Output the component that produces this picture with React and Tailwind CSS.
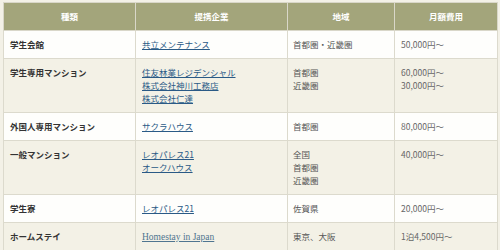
import React from 'react';

const rows = [
  { type: '学生会館', companies: ['共立メンテナンス'], areas: ['首都圏・近畿圏'], prices: ['50,000円～'] },
  {
    type: '学生専用マンション',
    companies: ['住友林業レジデンシャル', '株式会社神川工務店', '株式会社仁達'],
    areas: ['首都圏', '近畿圏'],
    prices: ['60,000円～', '30,000円～']
  },
  { type: '外国人専用マンション', companies: ['サクラハウス'], areas: ['首都圏'], prices: ['80,000円～'] },
  { type: '一般マンション', companies: ['レオパレス21', 'オークハウス'], areas: ['全国', '首都圏', '近畿圏'], prices: ['40,000円～'] },
  { type: '学生寮', companies: ['レオパレス21'], areas: ['佐賀県'], prices: ['20,000円～'] },
  { type: 'ホームステイ', companies: ['Homestay in Japan'], areas: ['東京、大阪'], prices: ['1泊4,500円～'], serif: true }
];

const App = () => {
  return (
    <div className="w-[500px] h-[250px] overflow-hidden bg-[#f3f1e7] pt-[2px] pl-[3px] pr-[3px] font-['Noto_Sans_CJK_JP','Noto_Sans',sans-serif]">
      <table className="w-[494px] table-fixed border-collapse text-[8.5px] leading-[13px]">
        <colgroup>
          <col className="w-[132px]" />
          <col className="w-[152px]" />
          <col className="w-[107px]" />
          <col className="w-[103px]" />
        </colgroup>
        <thead>
          <tr className="bg-[#a3a57b] text-white">
            {['種類', '提携企業', '地域', '月額費用'].map((h) => (
              <th key={h} className="h-[28px] border border-[#d9d7c9] font-bold text-center align-middle">
                {h}
              </th>
            ))}
          </tr>
        </thead>
        <tbody>
          {rows.map((row, i) => (
            <tr key={row.type} className={i % 2 === 0 ? 'bg-[#fefefc]' : 'bg-[#f3f1e6]'}>
              <td className="border border-[#dcdacd] px-[6px] py-[7px] align-top font-bold text-[#333333]">
                {row.type}
              </td>
              <td className="border border-[#dcdacd] px-[6px] py-[7px] align-top">
                {row.companies.map((c) => (
                  <div key={c}>
                    <a
                      href="#"
                      className={
                        row.serif
                          ? "text-[#4f7590] underline font-['Liberation_Serif',serif] text-[9.5px]"
                          : 'text-[#2a5a86] underline'
                      }
                    >
                      {c}
                    </a>
                  </div>
                ))}
              </td>
              <td className="border border-[#dcdacd] px-[5px] py-[7px] align-top text-[#555555]">
                {row.areas.map((a) => (
                  <div key={a}>{a}</div>
                ))}
              </td>
              <td className="border border-[#dcdacd] px-[6px] py-[7px] align-top text-[#666666]">
                {row.prices.map((p) => (
                  <div key={p}>{p}</div>
                ))}
              </td>
            </tr>
          ))}
        </tbody>
      </table>
    </div>
  );
};

export default App;
